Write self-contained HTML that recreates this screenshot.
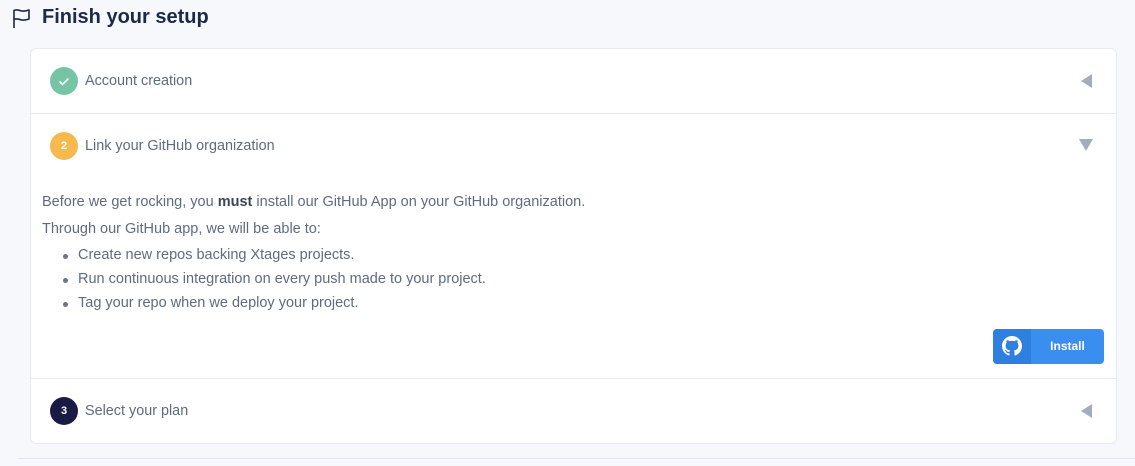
<!DOCTYPE html><html><head><style>
body{margin:0;width:1135px;height:466px;background:#f7f8fc;font-family:"Liberation Sans",sans-serif;position:relative;overflow:hidden;color:#5f6b7e}
h1{position:absolute;left:42px;top:6px;margin:0;font-size:20px;font-weight:bold;color:#1b2a4a}
.card{position:absolute;left:30px;top:48px;width:1085px;height:394px;background:#fff;border:1px solid #e6e9ef;border-radius:6px}
.row{position:absolute;left:0;width:1085px;height:64px;border-bottom:1px solid #e6e9ef}
.c{position:absolute;left:19px;top:18px;width:28px;height:28px;border-radius:50%;color:#fff;font-size:11px;font-weight:bold;text-align:center;line-height:28px}
.t{position:absolute;left:54px;top:24px;font-size:14.4px;color:#5f6b7e}
.tri{position:absolute;right:24px;top:25px;width:0;height:0;border-top:7px solid transparent;border-bottom:7px solid transparent;border-right:11px solid #a3adbd}
.p{position:absolute;left:11px;font-size:14.5px;color:#5f6b7e}
li{position:absolute;left:47px;font-size:14.5px;list-style:none}
li:before{content:"";position:absolute;left:-15px;top:7px;width:5px;height:5px;border-radius:50%;background:#6b7588}
</style></head><body>
<svg style="position:absolute;left:12px;top:8px" width="20" height="21" viewBox="0 0 20 21" fill="none" stroke="#1b2a4a" stroke-width="1.6" stroke-linejoin="round"><path d="M2 20V2.5c3-1.5 5 0 8 0.5s5-0.5 7-1v9c-2 0.5-4 1.5-7 1s-5-2-8-0.5"/></svg>
<h1>Finish your setup</h1>
<div class="card">
<div class="row" style="top:0"><div class="c" style="background:#76c4a5"><svg width="28" height="28" viewBox="0 0 28 28"><path d="M9.5 14.5l3 3 6-6" stroke="#fff" stroke-width="1.6" fill="none"/></svg></div><div class="t">Account creation</div><div class="tri"></div></div>
<div class="row" style="top:65px;height:264px"><div class="c" style="background:#f5b94e">2</div><div class="t">Link your GitHub organization</div>
<div class="tri" style="border:none;border-left:7px solid transparent;border-right:7px solid transparent;border-top:12px solid #a3adbd;top:25px;right:23px"></div>
<div class="p" style="top:80px">Before we get rocking, you <b style="color:#3c4657">must</b> install our GitHub App on your GitHub organization.</div>
<div class="p" style="top:107px">Through our GitHub app, we will be able to:</div>
<li style="top:133px">Create new repos backing Xtages projects.</li>
<li style="top:157px">Run continuous integration on every push made to your project.</li>
<li style="top:181px">Tag your repo when we deploy your project.</li>
<div style="position:absolute;left:962px;top:215px;width:111px;height:35px;border-radius:4px;background:#3a8ef0;overflow:hidden">
<div style="position:absolute;left:0;top:0;width:38px;height:35px;background:#2f7fe0"></div>
<svg style="position:absolute;left:9px;top:7px" width="20" height="20" viewBox="0 0 16 16"><path fill="#fff" d="M8 0C3.58 0 0 3.58 0 8c0 3.54 2.290 6.530 5.470 7.590.4.07.55-.17.55-.38 0-.19-.01-.82-.01-1.49-2.010.37-2.530-.49-2.690-.94-.09-.23-.48-.94-.82-1.130-.28-.15-.68-.52-.01-.53.63-.01 1.080.58 1.230.82.72 1.210 1.870.87 2.330.66.07-.52.28-.87.51-1.070-1.780-.2-3.640-.89-3.640-3.950 0-.87.31-1.590.82-2.150-.08-.2-.36-1.020.08-2.120 0 0 .67-.21 2.2.82.64-.18 1.320-.27 2-.27.68 0 1.360.09 2 .27 1.530-1.040 2.2-.82 2.2-.82.44 1.1.16 1.920.08 2.120.51.56.82 1.270.82 2.150 0 3.070-1.870 3.750-3.650 3.950.29.25.54.73.54 1.480 0 1.070-.01 1.930-.01 2.2 0 .21.15.46.55.38A8.013 8.013 0 0016 8c0-4.420-3.580-8-8-8z"/></svg>
<div style="position:absolute;left:38px;right:0;top:10px;text-align:center;color:#fff;font-size:12px;font-weight:bold">Install</div></div>
</div>
<div class="row" style="top:330px;border:none"><div class="c" style="background:#1b1a45">3</div><div class="t">Select your plan</div><div class="tri"></div></div>
</div>
<div style="position:absolute;left:18px;right:0;top:458px;height:1px;background:#e3e6ec"></div>
</body></html>
